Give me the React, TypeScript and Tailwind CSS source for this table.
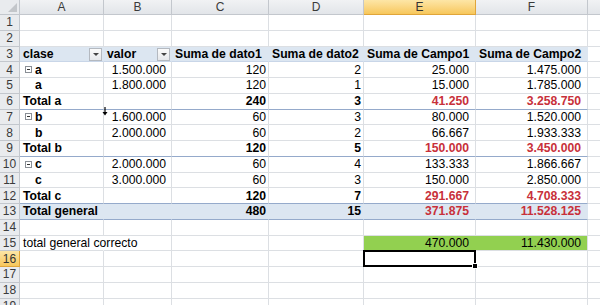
import React from 'react'

type Row = {
  kind: 'empty' | 'head' | 'item' | 'sub' | 'grand' | 'correct' | 'sel'
  a?: string
  expand?: boolean
  b?: string
  c?: string
  d?: string
  e?: string
  f?: string
}

const colW = ['w-[84px]', 'w-[68px]', 'w-[97px]', 'w-[95px]', 'w-[112px]', 'w-[112px]']
const letters = ['A', 'B', 'C', 'D', 'E', 'F']

const rows: Row[] = [
  { kind: 'empty' },
  { kind: 'empty' },
  { kind: 'head', a: 'clase', b: 'valor', c: 'Suma de dato1', d: 'Suma de dato2', e: 'Suma de Campo1', f: 'Suma de Campo2' },
  { kind: 'item', a: 'a', expand: true, b: '1.500.000', c: '120', d: '2', e: '25.000', f: '1.475.000' },
  { kind: 'item', a: 'a', b: '1.800.000', c: '120', d: '1', e: '15.000', f: '1.785.000' },
  { kind: 'sub', a: 'Total a', c: '240', d: '3', e: '41.250', f: '3.258.750' },
  { kind: 'item', a: 'b', expand: true, b: '1.600.000', c: '60', d: '3', e: '80.000', f: '1.520.000' },
  { kind: 'item', a: 'b', b: '2.000.000', c: '60', d: '2', e: '66.667', f: '1.933.333' },
  { kind: 'sub', a: 'Total b', c: '120', d: '5', e: '150.000', f: '3.450.000' },
  { kind: 'item', a: 'c', expand: true, b: '2.000.000', c: '60', d: '4', e: '133.333', f: '1.866.667' },
  { kind: 'item', a: 'c', b: '3.000.000', c: '60', d: '3', e: '150.000', f: '2.850.000' },
  { kind: 'sub', a: 'Total c', c: '120', d: '7', e: '291.667', f: '4.708.333' },
  { kind: 'grand', a: 'Total general', c: '480', d: '15', e: '371.875', f: '11.528.125' },
  { kind: 'empty' },
  { kind: 'correct', a: 'total general correcto', e: '470.000', f: '11.430.000' },
  { kind: 'sel' },
  { kind: 'empty' },
  { kind: 'empty' },
  { kind: 'empty' },
]

function FilterBtn() {
  return (
    <span className="absolute right-[1px] top-[1.5px] flex h-[13px] w-[13px] items-center justify-center border border-[#b4b9c0] bg-gradient-to-b from-[#fbfbfb] to-[#e6e8eb]">
      <span className="h-0 w-0 border-x-[3px] border-t-[3px] border-x-transparent border-t-[#444]" />
    </span>
  )
}

function Expander() {
  return (
    <span className="mr-[3px] ml-[1px] flex h-[7px] w-[7px] items-center justify-center border border-[#8a8f96] bg-white">
      <span className="h-px w-[3px] bg-[#333]" />
    </span>
  )
}

function SheetRow({ row, n }: { row: Row; n: number }) {
  const pivot = ['head', 'item', 'sub', 'grand'].includes(row.kind)
  const blue = row.kind === 'head' || row.kind === 'grand'
  const bold = row.kind !== 'item' && row.kind !== 'correct'
  const bottom =
    row.kind === 'sub' || row.kind === 'grand'
      ? 'border-b-[#95aacb]'
      : row.kind === 'head'
        ? 'border-b-[#c9d6e8]'
        : 'border-b-[#dcdfe3]'
  const vals = [row.a, row.b, row.c, row.d, row.e, row.f]
  const selRow = row.kind === 'sel'

  return (
    <div className="flex h-[15.75px]">
      <div
        className={`flex w-[20px] shrink-0 items-center justify-center border-r border-b text-[12px] leading-none ${
          selRow
            ? 'border-[#e0a53a] bg-gradient-to-b from-[#fde6a6] to-[#f7c75a] text-[#333]'
            : 'border-[#c3c7cd] bg-[#e9ebee] text-[#3a3a3a]'
        }`}
      >
        {n}
      </div>
      {vals.map((v, i) => {
        const red = pivot && (row.kind === 'sub' || row.kind === 'grand') && i >= 4
        const right = i > 0 && row.kind !== 'head'
        const green = row.kind === 'correct' && i >= 4
        const pr = i === 1 ? 'pr-[5px]' : i >= 4 ? 'pr-[6px]' : 'pr-[2px]'
        const overflowing = (row.kind === 'correct' && i === 0) || (selRow && i === 4)
        let rb = 'border-r-[#dcdfe3]'
        if (blue) rb = 'border-r-transparent'
        if (green) rb = i === 4 ? 'border-r-[#92d050]' : 'border-r-[#dcdfe3]'
        if (row.kind === 'correct' && i === 0) rb = 'border-r-transparent'
        return (
          <div
            key={i}
            className={`relative flex h-full shrink-0 items-center whitespace-nowrap border-r border-b pl-[3px] ${
              colW[i]
            } ${rb} ${bottom} ${blue ? 'bg-[#dce6f1]' : green ? 'bg-[#92d050]' : 'bg-white'} ${
              right ? `justify-end ${pr}` : ''
            } ${overflowing ? 'z-10 overflow-visible' : 'overflow-hidden'} ${bold ? 'font-bold' : ''} ${
              red ? 'text-[#c8303a]' : 'text-black'
            } ${row.kind === 'item' && i === 0 ? 'pl-[4px]' : ''}`}
          >
            {row.kind === 'item' && i === 0 ? (
              <>
                {row.expand ? <Expander /> : <span className="mr-[3px] ml-[1px] w-[7px]" />}
                <span className="font-bold">{v}</span>
              </>
            ) : (
              v
            )}
            {row.kind === 'head' && i < 2 && <FilterBtn />}
            {selRow && i === 4 && (
              <span className="absolute -top-[1.5px] -left-[1.5px] -right-[0.5px] -bottom-[0.5px] border-2 border-black">
                <span className="absolute -right-[4px] -bottom-[4px] h-[6px] w-[6px] border border-white bg-black" />
              </span>
            )}
          </div>
        )
      })}
      <div className="h-full flex-1 border-b border-b-[#dcdfe3] bg-white" />
    </div>
  )
}

export default function App() {
  return (
    <div className="relative h-[305px] w-[600px] overflow-hidden bg-white font-['Liberation_Sans',Arial,sans-serif] text-[12.2px] leading-none">
      <div className="flex h-[15px]">
        <div className="relative w-[20px] shrink-0 border-r border-b border-[#c3c7cd] bg-[#e9ebee]">
          <svg className="absolute right-[2px] bottom-[2px]" width="9" height="9" viewBox="0 0 9 9">
            <path d="M9 0 L9 9 L0 9 Z" fill="#c3c6ca" />
          </svg>
        </div>
        {letters.map((l, i) => (
          <div
            key={l}
            className={`flex shrink-0 items-center justify-center border-r border-b text-[12px] ${colW[i]} ${
              l === 'E'
                ? 'border-[#e0a53a] bg-gradient-to-b from-[#fde6a6] to-[#f7c75a] text-[#333]'
                : 'border-[#c3c7cd] bg-gradient-to-b from-[#f1f2f4] to-[#e2e5e9] text-[#3a3a3a]'
            }`}
          >
            {l}
          </div>
        ))}
        <div className="flex-1 border-b border-[#c3c7cd] bg-gradient-to-b from-[#f1f2f4] to-[#e2e5e9]" />
      </div>
      {rows.map((r, i) => (
        <SheetRow key={i} row={r} n={i + 1} />
      ))}
      <svg className="absolute left-[102px] top-[107px]" width="6" height="9" viewBox="0 0 6 9">
        <path d="M3 0 V7" stroke="#000" strokeWidth="1.2" />
        <path d="M0.5 5 L3 8.5 L5.5 5 Z" fill="#000" />
      </svg>
    </div>
  )
}
